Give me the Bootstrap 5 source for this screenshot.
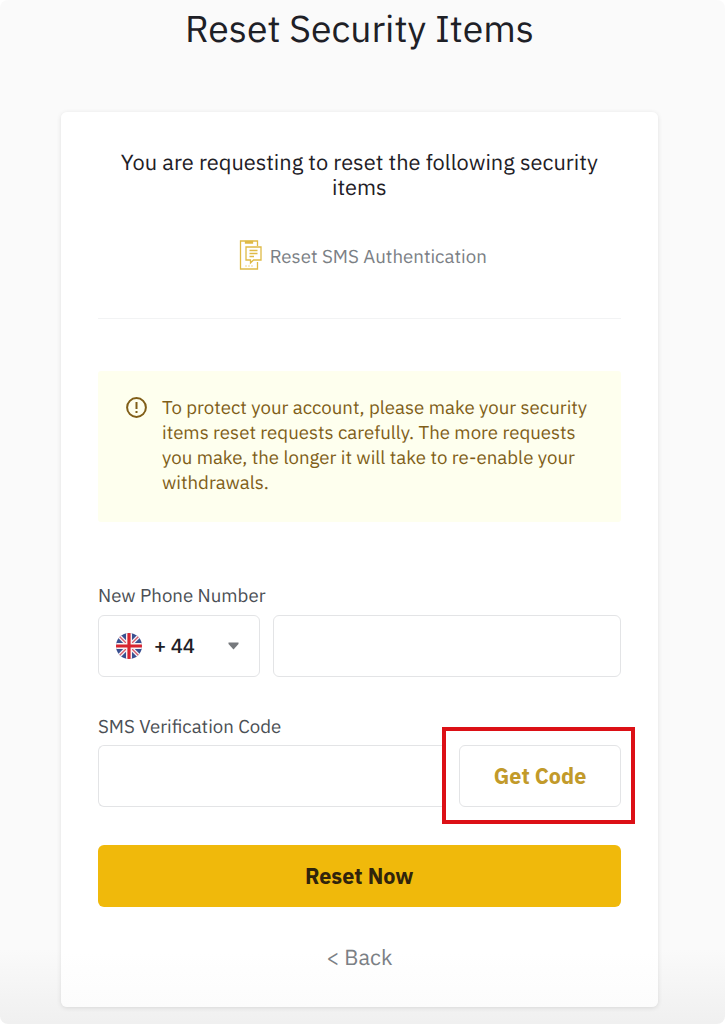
<!DOCTYPE html>
<html lang="en">
<head>
    <meta charset="UTF-8">
    <meta name="viewport" content="width=device-width, initial-scale=1.0">
    <title>Reset Security Items</title>
    <link href="https://cdn.jsdelivr.net/npm/bootstrap@5.3.3/dist/css/bootstrap.min.css" rel="stylesheet">
    <style>
        body { background: #fff; color: #1e2026; font-family: "IBM Plex Sans", Roboto, "Liberation Sans", sans-serif; text-rendering: geometricPrecision; }
        .page-frame { height: 1024px; border-radius: 8px; background: linear-gradient(#fafafa 950px, #f0f0f0 1023px); overflow: hidden; padding: 5px 67px 0 61px; }
        .page-title { font-size: 37.3px; line-height: 48px; height: 107px; margin: 0; font-weight: 400; }
        .reset-card { height: 895px; padding: 38px 37.5px 0 37px; border-radius: 6px; background: linear-gradient(#fff 840px, #fcfcfc); box-shadow: 0 1px 5px rgba(0, 0, 0, .11); }
        .intro { font-size: 21.8px; line-height: 25px; height: 90px; }
        .item-row { height: 30px; color: #7b8085; font-size: 18.7px; }
        .item-row svg { margin-left: 2px; }
        .item-row span { padding-top: 4px; margin-right: -5px; }
        .divider { height: 1px; background: #f2f3f4; margin: 48px 0 52px; }
        .notice { height: 151px; padding: 25px 28px; background: #feffee; color: #805e18; border-radius: 3px; font-size: 18.65px; line-height: 24.9px; }
        .notice svg { margin-top: 1px; margin-right: 15px; }
        .field-label { font-size: 18.65px; line-height: 24px; height: 31px; color: #4b4f55; }
        .phone-label { margin-top: 62px; }
        .sms-label { margin-top: 38px; }
        .field-box { height: 62px; border: 1px solid #e3e4e6; border-radius: 6px; background: transparent; }
        .country { width: 162px; padding: 0 20px 0 17px; }
        .dial-code { margin-left: 12px; font-size: 20.3px; font-weight: 500; letter-spacing: -.1px; }
        .phone-field { margin-left: 13px; min-width: 0; }
        .code-field { width: 361px; border-right: 0; border-radius: 6px 0 0 6px; margin-right: -17px; }
        .code-frame { width: 193px; height: 97px; border: 4px solid #dc1016; padding: 14px 10px 0 13px; margin: -18px -15px -17px 0; background: #fff; position: relative; }
        .code-btn { color: #c29a2a; font-size: 21.6px; font-weight: 700; }
        .code-line { margin-top: -1px; }
        .reset-btn { height: 62px; margin-top: 38px; background: #f0b90b; border: 0; border-radius: 6px; color: #30240c; font-size: 21.6px; font-weight: 700; }
        .back-row { margin-top: 37px; }
        .back-link { font-size: 21.7px; line-height: 26px; color: #7b8085; }
    </style>
</head>
<body>
<div class="page-frame">
    <h1 class="page-title text-center">Reset Security Items</h1>

    <div class="reset-card">
        <p class="intro text-center mb-0">You are requesting to reset the following security items</p>

        <!-- item being reset -->
        <div class="item-row d-flex align-items-center justify-content-center">
            <svg class="me-2" width="23" height="30" viewBox="0 0 23 30" fill="none" stroke="#dfba45" stroke-width="1.3">
                <path d="M18.500 6V1H1.500V29H18.500V22"/>
                <path d="M6.500 1.500H13.500V3H6.500Z" fill="#dfba45"/>
                <path d="M7 7H22V20H14.500L11.500 23V20H7Z"/>
                <path d="M10.500 10.500H18.500M10.500 13.500H18.500M10.500 16.500H15"/>
                <path d="M6 26H14" stroke-dasharray="2 1" stroke-width="1" opacity=".6"/>
            </svg>
            <span>Reset SMS Authentication</span>
        </div>

        <div class="divider"></div>

        <div class="notice d-flex">
            <svg class="flex-shrink-0" width="21" height="21" viewBox="0 0 21 21" fill="none" stroke="#805e18" stroke-width="2">
                <circle cx="10.500" cy="10.500" r="9.400"/>
                <path d="M10.500 5V12M10.500 14V16"/>
            </svg>
            <div class="text-nowrap">To protect your account, please make your security<br>items reset requests carefully. The more requests<br>you make, the longer it will take to re-enable your<br>withdrawals.</div>
        </div>

        <form>
            <label for="phone" class="field-label phone-label d-block">New Phone Number</label>
            <div class="d-flex">
                <div class="field-box country d-flex align-items-center">
                    <svg width="26" height="26" viewBox="0 0 26 26">
                        <defs><clipPath id="flag"><circle cx="13" cy="13" r="13"/></clipPath></defs>
                        <g clip-path="url(#flag)">
                            <rect width="26" height="26" fill="#3a5091"/>
                            <path d="M0 0L26 26M26 0L0 26" stroke="#f3f1f6" stroke-width="4"/>
                            <path d="M0 0L26 26M26 0L0 26" stroke="#d75a6b" stroke-width="1.300"/>
                            <path d="M13 0V26M0 13H26" stroke="#f7f3f5" stroke-width="6"/>
                            <path d="M13 0V26M0 13H26" stroke="#d8232f" stroke-width="3.200"/>
                        </g>
                    </svg>
                    <span class="dial-code">+ 44</span>
                    <svg class="ms-auto" width="11" height="8" viewBox="0 0 11 8"><path d="M.5 .5H10.500V2L5.500 7.500L.5 2Z" fill="#76797d"/></svg>
                </div>
                <input type="tel" class="field-box phone-field flex-grow-1" id="phone">
            </div>

            <label for="smsCode" class="field-label sms-label d-block">SMS Verification Code</label>
            <div class="d-flex code-line">
                <input type="text" class="field-box code-field" id="smsCode">
                <!-- red highlight around the button -->
                <div class="code-frame">
                    <button type="button" class="field-box code-btn w-100 p-0">Get Code</button>
                </div>
            </div>

            <button type="submit" class="reset-btn w-100 p-0">Reset Now</button>
        </form>

        <div class="back-row text-center"><a href="#" class="back-link text-decoration-none">&lt; Back</a></div>
    </div>
</div>
<script src="https://cdn.jsdelivr.net/npm/bootstrap@5.3.3/dist/js/bootstrap.bundle.min.js"></script>
</body>
</html>
